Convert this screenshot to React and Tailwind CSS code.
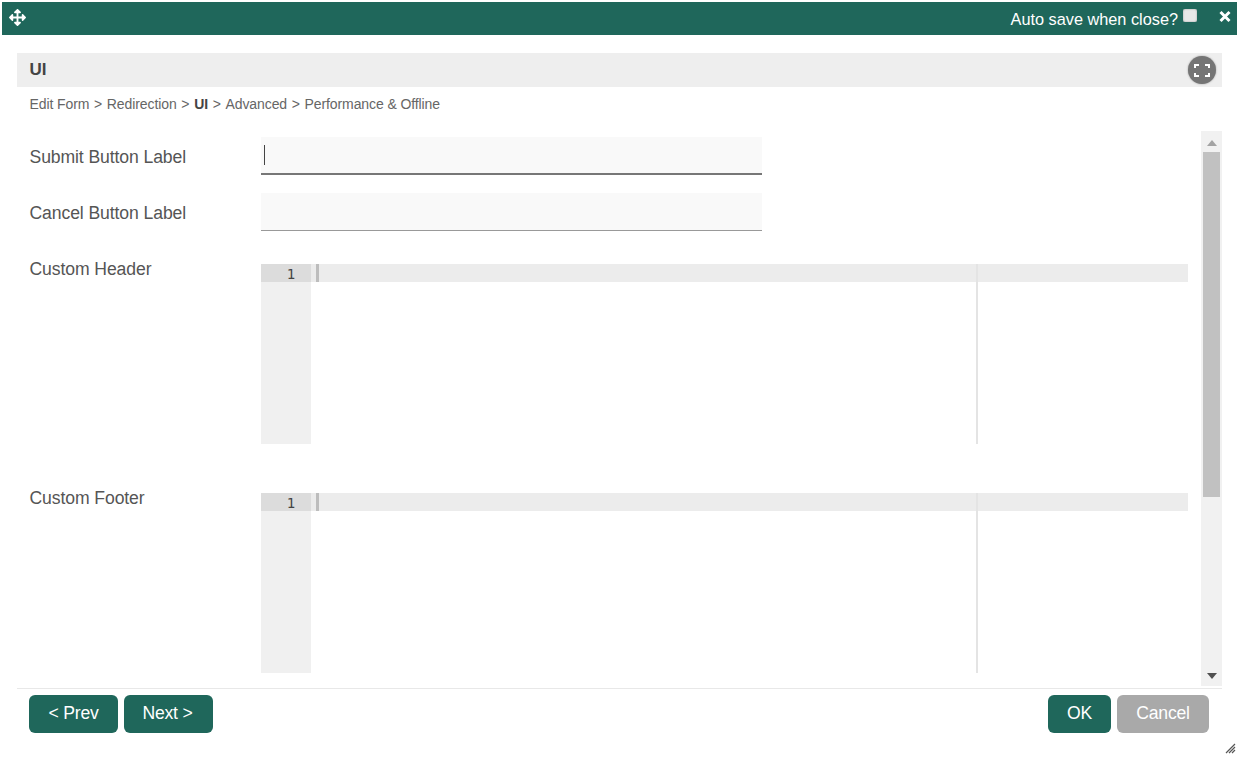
import React from "react";

function Editor() {
  return (
    <div className="relative flex h-[180px] w-[927px] font-['DejaVu_Sans_Mono',monospace] text-[14px] text-[#444]">
      <div className="w-[50px] bg-[#f0f0f0]">
        <div className="flex h-[18px] items-center justify-end bg-[#dcdcdc] pr-[16px] pt-[1px] leading-[18px]">1</div>
      </div>
      <div className="flex-1">
        <div className="h-[18px] bg-[#ececec]" />
      </div>
      <div className="absolute left-[55px] top-0 h-[18px] w-[3px] bg-[#bdbdbd]" />
      <div className="absolute left-[715px] top-0 h-full w-[2px] bg-[#e4e4e4]" />
    </div>
  );
}

function Btn({ children, className }) {
  return (
    <button className={"flex h-[38px] items-center justify-center rounded-[6px] pb-[2px] text-[17.6px] tracking-[-0.2px] text-white " + className}>
      {children}
    </button>
  );
}

export default function App() {
  return (
    <div className="relative h-[758px] w-[1239px] overflow-hidden bg-white font-['Liberation_Sans',Arial,sans-serif]">
      <div className="px-[2px] pt-[2px]">
        <div className="flex h-[33px] items-start justify-between bg-[#1f675b] text-white">
          <svg className="ml-[7px] mt-[7px]" width="17" height="17" viewBox="0 0 512 512" fill="#fff">
            <path d="M352.2 425.8l-79.2 79.2c-9.4 9.4-24.6 9.4-33.9 0l-79.2-79.2c-15.1-15.1-4.4-41 17-41h51.2L228 284H127.2v51.2c0 21.4-25.9 32.1-41 17L7 273c-9.4-9.4-9.4-24.6 0-33.9l79.2-79.2c15.1-15.1 41-4.4 41 17V228H228V127.2h-51.2c-21.4 0-32.1-25.9-17-41l79.2-79.2c9.4-9.4 24.6-9.4 33.9 0l79.2 79.2c15.1 15.1 4.4 41-17 41H284V228h100.8v-51.2c0-21.4 25.9-32.1 41-17l79.2 79.2c9.4 9.4 9.4 24.6 0 33.9l-79.2 79.2c-15.1 15.1-41 4.4-41-17V284H284v100.8h51.2c21.4 0 32.1 25.9 17 41z" />
          </svg>
          <div className="flex items-start">
            <span className="mt-[7px] text-[16.3px] leading-[20px]">Auto save when close?</span>
            <span className="ml-[5px] mt-[7px] h-[13px] w-[14px] rounded-[2px] bg-[#e8e8e8] shadow-[inset_0_0_2px_#999]" />
            <svg className="ml-[22px] mr-[6px] mt-[8px]" width="12" height="13" viewBox="0 0 12 13" fill="none" stroke="#fff" strokeWidth="3">
              <path d="M1.5 2l9 9M10.5 2l-9 9" />
            </svg>
          </div>
        </div>
      </div>

      <div className="mx-[17px] mt-[18px] flex h-[34px] items-center justify-between bg-[#eeeeee] pl-[12.5px] pr-[6px]">
        <span className="text-[17px] font-bold text-[#444]">UI</span>
        <span className="flex h-[28px] w-[28px] items-center justify-center rounded-full bg-[#757575] shadow-[0_0_2px_#999]">
          <svg width="16" height="13" viewBox="0 0 16 13" fill="none" stroke="#fff" strokeWidth="2">
            <path d="M1 4V1h4M11 1h4v3M15 9v3h-4M5 12H1V9" />
          </svg>
        </span>
      </div>

      <div className="mx-[17px] mt-[8px] flex h-[18px] items-center gap-[4.75px] pl-[12.5px] text-[14px] leading-[18px] tracking-[-0.1px] text-[#666]">
        <span>Edit Form</span><span>&gt;</span>
        <span>Redirection</span><span>&gt;</span>
        <span className="font-bold text-[#444]">UI</span><span>&gt;</span>
        <span>Advanced</span><span>&gt;</span>
        <span>Performance &amp; Offline</span>
      </div>

      <div className="mx-[17px] mt-[18px] flex h-[555px]">
        <div className="flex-1 overflow-hidden pl-[12.5px] pt-[6px] text-[17.6px] tracking-[-0.1px] text-[#555]">
          <div className="flex h-[56px]">
            <label className="w-[231.5px] pt-[8px] leading-[24px]">Submit Button Label</label>
            <div className="flex h-[38px] w-[501px] items-center border-b-2 border-[#777] bg-[#f9f9f9] pl-[3px]">
              <span className="h-[20px] w-px bg-[#444]" />
            </div>
          </div>
          <div className="flex h-[71px]">
            <label className="w-[231.5px] pt-[8px] leading-[24px]">Cancel Button Label</label>
            <div className="h-[38px] w-[501px] border-b border-[#999] bg-[#f9f9f9]" />
          </div>
          <div className="flex h-[229px]">
            <label className="w-[231.5px] leading-[10px]">Custom Header</label>
            <Editor />
          </div>
          <div className="flex">
            <label className="w-[231.5px] leading-[10px]">Custom Footer</label>
            <Editor />
          </div>
        </div>
        <div className="flex w-[21px] flex-col items-center bg-[#f1f1f1]">
          <svg className="mt-[9px] shrink-0" width="10" height="6" viewBox="0 0 10 6" fill="#a3a3a3"><path d="M5 0l5 6H0z" /></svg>
          <div className="mt-[6px] h-[345px] w-[17px] bg-[#c1c1c1]" />
          <div className="flex-1" />
          <svg className="mb-[7px] shrink-0" width="10" height="6" viewBox="0 0 10 6" fill="#505050"><path d="M5 6l5-6H0z" /></svg>
        </div>
      </div>

      <div className="mx-[17px] mt-[2px] flex h-[45px] items-end justify-between border-t border-[#e8e8e8] pl-[12px] pr-[13px]">
        <div className="flex gap-[6px]">
          <Btn className="w-[89px] bg-[#1f675b]">&lt; Prev</Btn>
          <Btn className="w-[89px] bg-[#1f675b] pr-[2px]">Next &gt;</Btn>
        </div>
        <div className="flex gap-[6px]">
          <Btn className="w-[63px] bg-[#1f675b]">OK</Btn>
          <Btn className="w-[92px] bg-[#a9a9a9]">Cancel</Btn>
        </div>
      </div>

      <svg className="absolute bottom-[4px] right-[3px]" width="11" height="11" viewBox="0 0 11 11" stroke="#555" strokeWidth="1.2">
        <path d="M1 10l9-9M4 10l6-6M7 10l3-3" />
      </svg>
    </div>
  );
}
